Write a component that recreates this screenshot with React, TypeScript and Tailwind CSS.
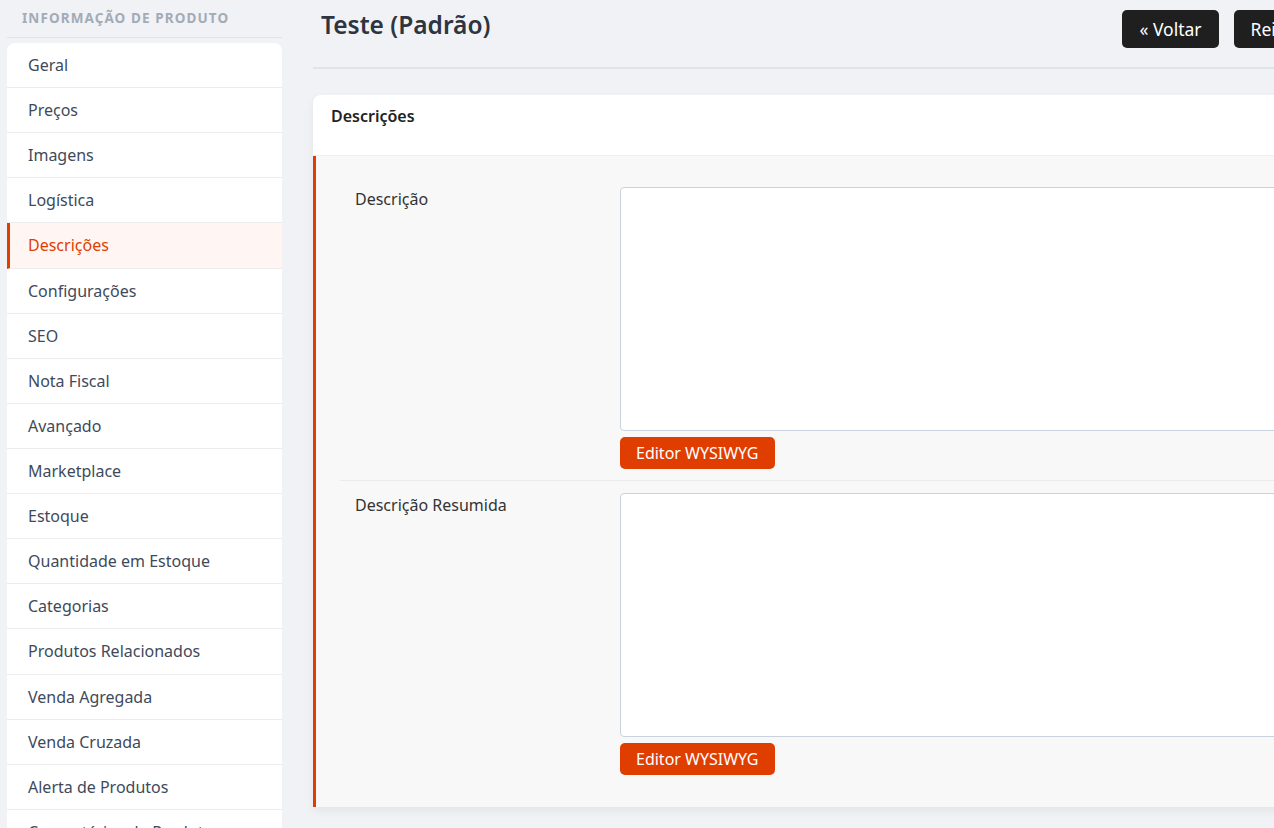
import React from 'react'

const sections = [
  'Geral',
  'Preços',
  'Imagens',
  'Logística',
  'Descrições',
  'Configurações',
  'SEO',
  'Nota Fiscal',
  'Avançado',
  'Marketplace',
  'Estoque',
  'Quantidade em Estoque',
  'Categorias',
  'Produtos Relacionados',
  'Venda Agregada',
  'Venda Cruzada',
  'Alerta de Produtos',
  'Comentários do Produto',
]

const active = 'Descrições'

function Sidebar() {
  return (
    <aside className="ml-[7px] w-[275px] shrink-0">
      <div className="flex h-[38px] items-center border-b border-[#dfe4ea] pl-[15px] text-[13.5px] font-bold tracking-[1.1px] text-[#a3abb7]">
        INFORMAÇÃO DE PRODUTO
      </div>
      <ul className="mt-[5px] overflow-hidden rounded-t-[8px] bg-white">
        {sections.map((name) => {
          const isActive = name === active
          return (
            <li
              key={name}
              className={
                isActive
                  ? 'flex h-[45.12px] items-center border-b border-l-[3px] border-[#ececec] border-l-[#df3e00] bg-[#fff6f3] pl-[18px] text-[16px] text-[#df3e00]'
                  : 'flex h-[45.12px] items-center border-b border-[#ececec] pl-[21px] text-[16px] text-[#3e4a5b]'
              }
            >
              {name}
            </li>
          )
        })}
      </ul>
    </aside>
  )
}

function EditorField({ label, last }: { label: string; last?: boolean }) {
  return (
    <div className={last ? 'flex py-[12px]' : 'flex border-b border-[#ebebeb] pb-[11px] pt-[12px]'}>
      <label className="w-[280px] shrink-0 pl-[15px] text-[16px] leading-[24px] text-[#333]">{label}</label>
      <div className="flex-1">
        <textarea className="block h-[244px] w-full resize-none rounded-[4px] border border-[#c9d3df] bg-white" />
        <button className="mt-[6px] h-[32px] rounded-[5px] bg-[#df3e00] px-[16px] text-[16px] text-white">
          Editor WYSIWYG
        </button>
      </div>
    </div>
  )
}

export default function App() {
  return (
    <div
      className="flex h-[828px] w-[1274px] overflow-hidden bg-[#f0f2f5]"
      style={{ fontFamily: '"Noto Sans", "Open Sans", sans-serif' }}
    >
      <Sidebar />
      <main className="ml-[31px] w-[1134px] shrink-0">
        <header className="flex h-[69px] items-start border-b-2 border-[#dfe4ea] pr-[10px]">
          <h1 className="pl-[8px] pt-[7px] text-[24.5px] leading-[36px] font-semibold text-[#2e3440]">Teste (Padrão)</h1>
          <div className="ml-auto flex gap-[15px] pt-[10px]">
            <button className="h-[38px] rounded-[5px] bg-[#1f1f1f] px-[17px] text-[17.5px] text-white">« Voltar</button>
            <button className="h-[38px] rounded-[5px] bg-[#1f1f1f] px-[17px] text-[17.5px] text-white">Reiniciar</button>
            <button className="h-[38px] rounded-[5px] bg-[#1f1f1f] px-[17px] text-[17.5px] text-white">Salvar</button>
          </div>
        </header>

        <section className="mt-[26px] overflow-hidden rounded-t-[8px] bg-white shadow-[0_4px_10px_rgba(0,0,0,0.06)]">
          <div className="flex h-[61px] items-start border-b border-[#eef0f2] pl-[18px] pt-[9px] text-[16px] leading-[24px] font-semibold text-[#222]">
            Descrições
          </div>
          <div className="border-l-[3px] border-[#df3e00] bg-[#f8f8f8] pb-[20px] pl-[24px] pt-[19px]">
            <EditorField label="Descrição" />
            <EditorField label="Descrição Resumida" last />
          </div>
        </section>
      </main>
    </div>
  )
}
